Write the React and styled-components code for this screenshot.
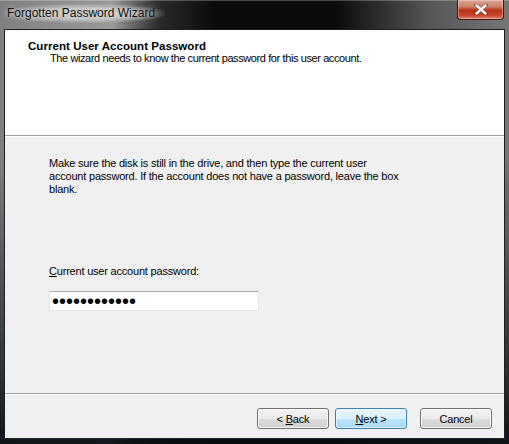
import styled, { createGlobalStyle } from 'styled-components';

const GlobalStyle = createGlobalStyle`
  html, body {
    margin: 0;
    padding: 0;
    background: #000;
  }
  #root {
    width: 509px;
    height: 444px;
  }
`;

const Window = styled.div`
  width: 509px;
  height: 444px;
  box-sizing: border-box;
  display: flex;
  flex-direction: column;
  font-family: 'Liberation Sans', Arial, sans-serif;
  background:
    linear-gradient(to bottom, rgba(0, 0, 0, 0) 0%, rgba(0, 0, 0, 0) 35%, rgba(8, 12, 18, 0.92) 100%),
    linear-gradient(to right, #7f7f7f 0%, #9a9a9a 22%, #2b2b2b 31%, #0b0b0d 42%, #0b0b0d 66%, #555 84%, #767676 100%);
`;

const TitleBar = styled.div`
  height: 29px;
  display: flex;
  align-items: flex-start;
  justify-content: space-between;
  padding-left: 4px;
  box-shadow: inset 0 1px 0 rgba(255, 255, 255, 0.25);
`;

const TitleText = styled.div`
  margin-top: 4px;
  padding: 2px 10px 3px 3px;
  font-size: 12px;
  color: #111;
  border-radius: 10px;
  background: radial-gradient(ellipse at center, rgba(210, 210, 210, 0.75) 40%, rgba(200, 200, 200, 0) 75%);
  text-shadow: 0 0 6px rgba(255, 255, 255, 0.8);
`;

const CloseButton = styled.div`
  width: 47px;
  height: 20px;
  margin-right: 5px;
  box-sizing: border-box;
  border: 1px solid #3d1a14;
  border-top: none;
  border-radius: 0 0 4px 4px;
  background: linear-gradient(to bottom, #dba595 0%, #cf806b 35%, #b8311a 55%, #c8462b 80%, #dc866c 100%);
  box-shadow: inset 0 0 0 1px rgba(255, 220, 210, 0.45);
  display: flex;
  align-items: center;
  justify-content: center;
`;

const Client = styled.div`
  flex: 1;
  margin: 0 4px 5px 4px;
  border: 1px solid #1c1f24;
  display: flex;
  flex-direction: column;
  background: #f0f0f0;
  color: #000;
`;

const Header = styled.div`
  height: 106px;
  background: #fff;
  border-bottom: 1px solid #a0a0a0;
  padding: 10px 0 0 23px;
  box-sizing: border-box;
  flex-shrink: 0;
`;

const HeaderTitle = styled.div`
  font-size: 11.5px;
  font-weight: bold;
  line-height: 13px;
  letter-spacing: 0.05px;
`;

const HeaderSubtitle = styled.div`
  font-size: 11px;
  line-height: 13px;
  padding-left: 22px;
  margin-top: -1px;
  letter-spacing: -0.4px;
`;

const Body = styled.div`
  flex: 1;
  padding: 20px 0 0 44px;
  display: flex;
  flex-direction: column;
  border-top: 1px solid #fff;
`;

const Paragraph = styled.p`
  margin: 0;
  font-size: 11px;
  line-height: 13px;
  letter-spacing: -0.2px;
`;

const Label = styled.label`
  margin-top: 69px;
  font-size: 11px;
  line-height: 13px;
  letter-spacing: -0.2px;
`;

const Key = styled.span`
  text-decoration: underline;
`;

const PasswordInput = styled.input`
  margin-top: 13px;
  width: 210px;
  height: 20px;
  box-sizing: border-box;
  border: 1px solid #e3e9ef;
  border-top-color: #abadb3;
  border-left-color: #e2e3ea;
  background: #fff;
  padding: 0 2px;
  font-family: 'Liberation Sans', Arial, sans-serif;
  font-size: 20px;
  line-height: 18px;
  color: #000;
  outline: none;
`;

const Footer = styled.div`
  height: 45px;
  box-sizing: border-box;
  border-top: 1px solid #a0a0a0;
  box-shadow: inset 0 1px 0 #fff;
  padding: 14px 12px 0 0;
  display: flex;
  justify-content: flex-end;
  align-items: flex-start;
  flex-shrink: 0;
`;

const Button = styled.button`
  width: 72px;
  height: 21px;
  box-sizing: border-box;
  margin-left: ${(p) => p.gap || 0}px;
  font-family: 'Liberation Sans', Arial, sans-serif;
  font-size: 11px;
  letter-spacing: -0.2px;
  color: #000;
  padding: 0;
  border-radius: 3px;
  border: 1px solid ${(p) => (p.focused ? '#3c7fb1' : '#707070')};
  background: ${(p) =>
    p.focused
      ? 'linear-gradient(to bottom, #eaf6fd 0%, #d9f0fc 50%, #bee6fd 51%, #a7d9f5 100%)'
      : 'linear-gradient(to bottom, #f2f2f2 0%, #ebebeb 50%, #dddddd 51%, #cfcfcf 100%)'};
  box-shadow: inset 0 0 0 1px ${(p) => (p.focused ? 'rgba(255,255,255,0.6)' : 'rgba(255,255,255,0.8)')};
`;

function CloseGlyph() {
  return (
    <svg width="14" height="11" viewBox="0 0 14 11">
      <path
        d="M2 1 L12 10 M12 1 L2 10"
        stroke="#3a1510"
        strokeWidth="3.6"
        strokeLinecap="round"
        opacity="0.5"
      />
      <path d="M2.5 1.5 L11.5 9.5 M11.5 1.5 L2.5 9.5" stroke="#fff" strokeWidth="2.4" strokeLinecap="round" />
    </svg>
  );
}

export default function App() {
  return (
    <>
      <GlobalStyle />
      <Window>
        <TitleBar>
          <TitleText>Forgotten Password Wizard</TitleText>
          <CloseButton>
            <CloseGlyph />
          </CloseButton>
        </TitleBar>
        <Client>
          <Header>
            <HeaderTitle>Current User Account Password</HeaderTitle>
            <HeaderSubtitle>The wizard needs to know the current password for this user account.</HeaderSubtitle>
          </Header>
          <Body>
            <Paragraph>
              Make sure the disk is still in the drive, and then type the current user
              <br />
              account password. If the account does not have a password, leave the box
              <br />
              blank.
            </Paragraph>
            <Label htmlFor="pw">
              <Key>C</Key>urrent user account password:
            </Label>
            <PasswordInput id="pw" type="password" value="passwordabcd" readOnly />
          </Body>
          <Footer>
            <Button>
              &lt; <Key>B</Key>ack
            </Button>
            <Button focused gap={6}>
              <Key>N</Key>ext &gt;
            </Button>
            <Button gap={13}>Cancel</Button>
          </Footer>
        </Client>
      </Window>
    </>
  );
}
